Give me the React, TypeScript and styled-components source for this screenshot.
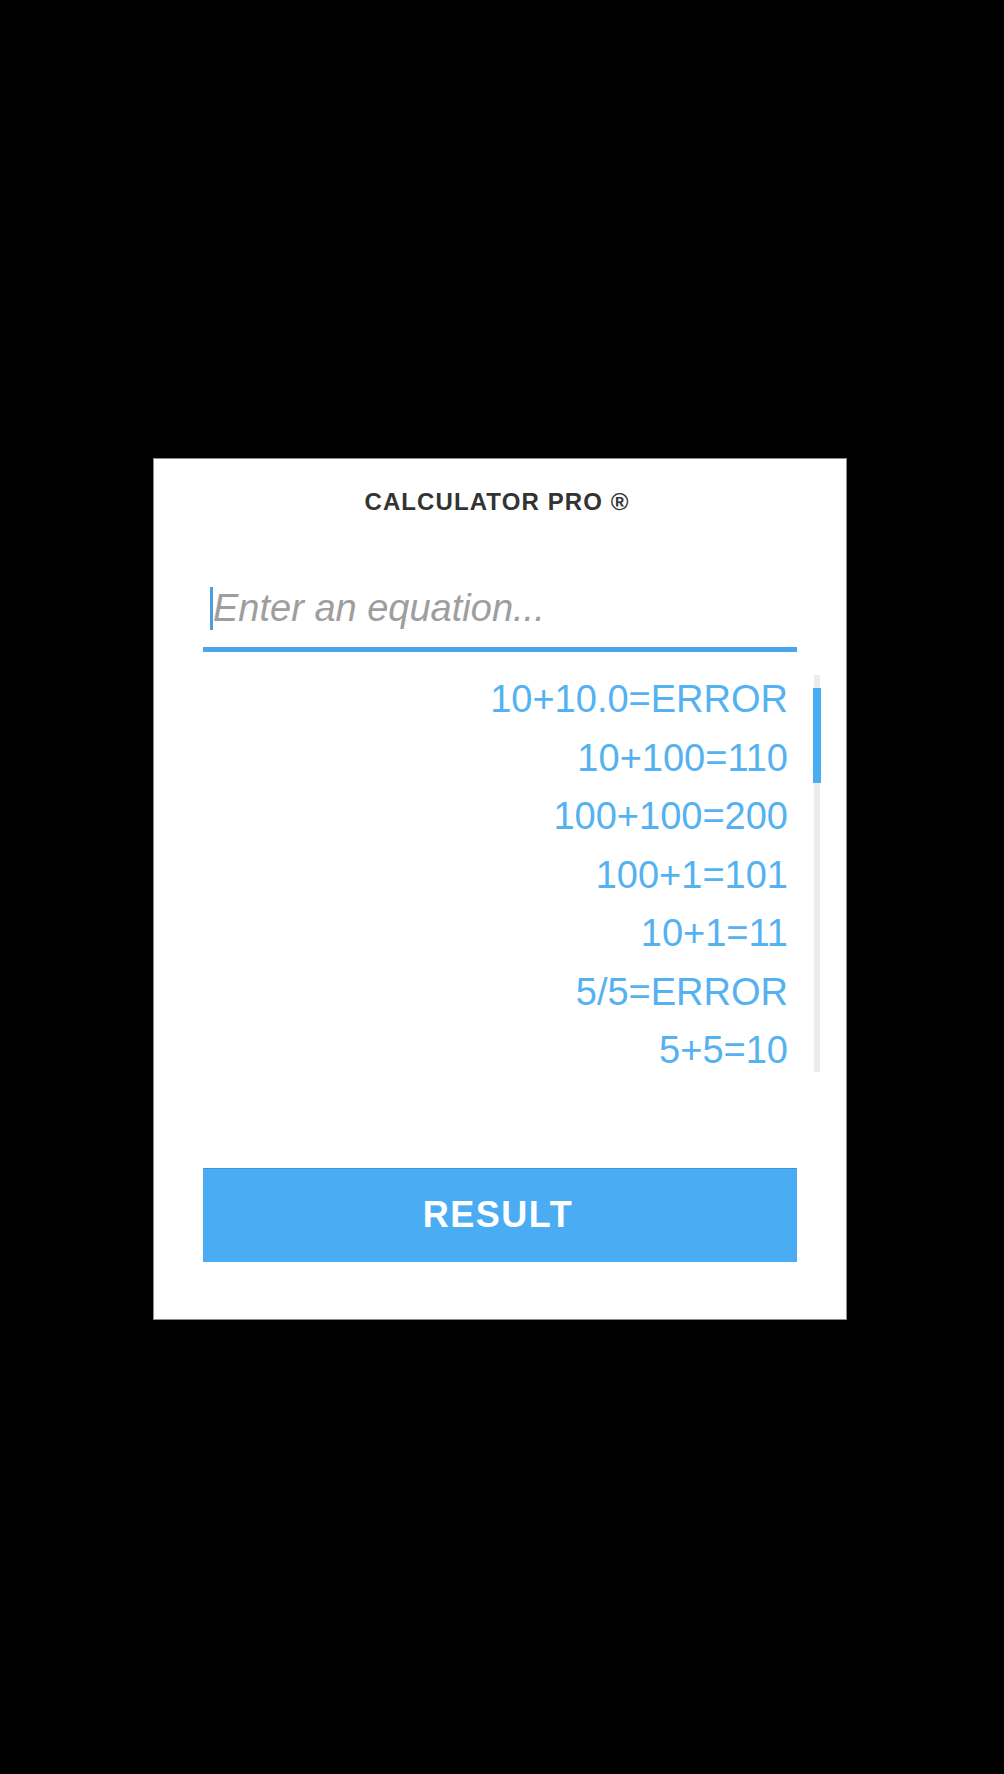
import React from "react";
import styled, { createGlobalStyle } from "styled-components";

const GlobalStyle = createGlobalStyle`
  html, body {
    margin: 0;
    padding: 0;
    background: #000000;
  }
  body {
    font-family: "Liberation Sans", Arial, sans-serif;
    min-height: 1774px;
  }
`;

const Page = styled.main`
  display: flex;
  justify-content: flex-start;
  padding: 458px 0 0 153px;
`;

const Card = styled.section`
  box-sizing: border-box;
  width: 694px;
  height: 862px;
  background: #ffffff;
  border: 1px solid #8c8c8c;
  padding: 29px 49px 0 49px;
  display: flex;
  flex-direction: column;
`;

const Title = styled.h1`
  margin: 0;
  font-family: "Liberation Sans", Arial, sans-serif;
  font-weight: 700;
  font-size: 24px;
  line-height: 28px;
  letter-spacing: 1.1px;
  color: #333333;
  text-align: center;
  padding-right: 6px;
`;

const Field = styled.label`
  position: relative;
  display: block;
  margin-top: 54px;
  border-bottom: 5px solid #4aa5ea;
`;

const Input = styled.input`
  box-sizing: border-box;
  display: block;
  width: 100%;
  height: 77px;
  padding: 0 0 0 10px;
  border: none;
  outline: none;
  background: transparent;
  font-family: "Liberation Sans", Arial, sans-serif;
  font-size: 38px;
  font-style: italic;
  color: #444444;
  caret-color: transparent;

  &::placeholder {
    color: #9e9e9e;
    opacity: 1;
  }
`;

const Caret = styled.span`
  position: absolute;
  left: 7px;
  top: 17px;
  width: 3px;
  height: 43px;
  background: #4a9fe3;
`;

const History = styled.div`
  position: relative;
  margin-top: 18px;
  display: flex;
  flex-direction: column;
  align-items: flex-end;
`;

const Entry = styled.div`
  font-family: "Liberation Sans", Arial, sans-serif;
  font-size: 38px;
  line-height: 58.5px;
  color: #55b2f1;
  padding-right: 9px;
  white-space: nowrap;
`;

const ScrollTrack = styled.div`
  position: absolute;
  left: calc(100% + 17px);
  top: 5px;
  width: 6px;
  height: 397px;
  background: #ececec;
`;

const ScrollThumb = styled.div`
  position: absolute;
  left: calc(100% + 16px);
  top: 18px;
  width: 8px;
  height: 95px;
  background: #4aadf3;
`;

const ResultButton = styled.button`
  box-sizing: border-box;
  margin-top: 88px;
  width: 100%;
  height: 94px;
  border: none;
  border-top: 1px solid #3f93d6;
  background: #4aadf3;
  color: #ffffff;
  font-family: "Liberation Sans", Arial, sans-serif;
  font-weight: 700;
  font-size: 36px;
  letter-spacing: 1.5px;
  padding: 0 4px 0 0;
  cursor: pointer;
`;

const entries = [
  "10+10.0=ERROR",
  "10+100=110",
  "100+100=200",
  "100+1=101",
  "10+1=11",
  "5/5=ERROR",
  "5+5=10",
];

export default function App() {
  return (
    <>
      <GlobalStyle />
      <Page>
        <Card>
          <Title>CALCULATOR PRO ®</Title>
          <Field>
            <Caret />
            <Input type="text" placeholder="Enter an equation..." />
          </Field>
          <History>
            {entries.map((e) => (
              <Entry key={e}>{e}</Entry>
            ))}
            <ScrollTrack />
            <ScrollThumb />
          </History>
          <ResultButton type="button">RESULT</ResultButton>
        </Card>
      </Page>
    </>
  );
}
